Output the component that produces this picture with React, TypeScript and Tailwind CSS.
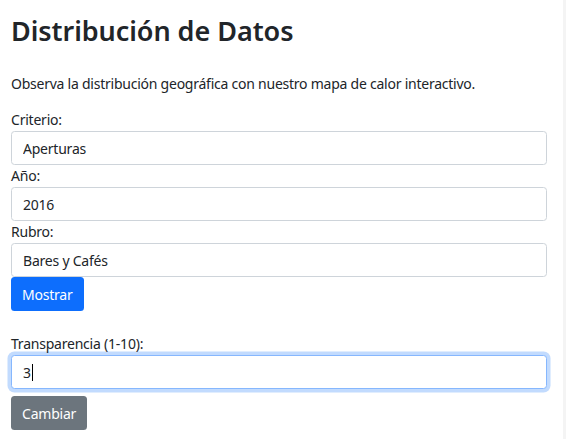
import React from 'react';

const fields = [
    { label: 'Criterio:', value: 'Aperturas' },
    { label: 'Año:', value: '2016' },
    { label: 'Rubro:', value: 'Bares y Cafés' },
];

export default function App() {
    return (
        <div className="flex min-h-[439px] w-[566px] bg-white text-[#212529] font-['Noto_Sans',sans-serif]">
            <div className="flex-1 px-[11px] pt-[14px]">
                {/* Title */}
                <h1 className="text-[27px] leading-[34px] font-semibold tracking-[-0.05px]">Distribución de Datos</h1>
                <p className="mt-[25px] mb-[14px] text-[14px] leading-[22px] tracking-[-0.24px]">
                    Observa la distribución geográfica con nuestro mapa de calor interactivo.
                </p>

                {/* Filters */}
                <div className="w-[536px] text-[14px] tracking-[-0.22px]">
                    {fields.map((f) => (
                        <div key={f.label}>
                            <label className="block leading-[22px]">{f.label}</label>
                            <input
                                readOnly
                                value={f.value}
                                className="block w-full h-[34px] px-[11px] border border-[#ced4da] rounded-[3.5px] bg-white text-[#212529] outline-none"
                            />
                        </div>
                    ))}
                    <button className="h-[34px] px-[11px] rounded-[3.5px] bg-[#0d6efd] text-white">Mostrar</button>

                    <div className="h-[22px]"></div>

                    <label className="block leading-[22px]">Transparencia (1-10):</label>
                    <div className="flex items-center h-[34px] px-[11px] border border-[#86b7fe] rounded-[3.5px] bg-white shadow-[0_0_0_3.5px_rgba(13,110,253,0.25)]">
                        <span>3</span>
                        <span className="ml-[1px] w-px h-[17px] bg-black"></span>
                    </div>
                    <button className="mt-[7px] h-[34px] px-[11px] rounded-[3.5px] bg-[#6c757d] text-white">Cambiar</button>
                </div>
            </div>
            <div className="w-[3px] bg-[#f4f4f4]"></div>
        </div>
    );
}
